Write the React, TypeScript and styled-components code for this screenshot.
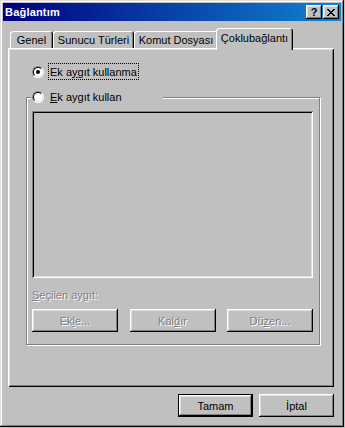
import styled, { createGlobalStyle, css } from 'styled-components';

const GlobalStyle = createGlobalStyle`
  html, body {
    margin: 0;
    padding: 0;
    background: #c0c0c0;
  }
  body {
    font-family: "Liberation Sans", Arial, sans-serif;
    font-size: 11px;
    color: #000;
  }
`;

const raised = css`
  box-shadow: inset -1px -1px #000, inset 1px 1px #fff, inset -2px -2px #808080, inset 2px 2px #dfdfdf;
`;

const Window = styled.div`
  width: 344px;
  height: 427px;
  box-sizing: border-box;
  padding: 3px;
  background: #c0c0c0;
  box-shadow: inset -1px -1px #000, inset 1px 1px #dfdfdf, inset -2px -2px #808080, inset 2px 2px #fff;
  display: flex;
  flex-direction: column;
`;

const TitleBar = styled.div`
  height: 18px;
  flex: none;
  display: flex;
  align-items: center;
  padding: 0 2px;
  background: linear-gradient(90deg, #000080, #1084d0);
  color: #fff;
`;

const TitleText = styled.span`
  flex: 1;
  font-weight: bold;
  font-size: 11px;
  letter-spacing: 0.2px;
`;

const TitleButtons = styled.div`
  display: flex;
  gap: 1px;
`;

const TitleButton = styled.div`
  width: 16px;
  height: 14px;
  box-sizing: border-box;
  background: #c0c0c0;
  ${raised};
  display: flex;
  align-items: center;
  justify-content: center;
  color: #000;
  font-weight: bold;
  font-size: 11px;
  line-height: 1;
`;

const Body = styled.div`
  flex: 1;
  display: flex;
  flex-direction: column;
  padding: 7px 7px 0 5px;
`;

const TabStrip = styled.div`
  height: 20px;
  flex: none;
  display: flex;
  align-items: flex-end;
  padding-left: 2px;
`;

const Tab = styled.div<{ $w: number; $active?: boolean }>`
  width: ${(p) => p.$w}px;
  height: 17px;
  box-sizing: border-box;
  display: flex;
  align-items: center;
  justify-content: center;
  background: #c0c0c0;
  border-radius: 3px 3px 0 0;
  box-shadow: inset 1px 1px #fff, inset -1px 0 #000, inset -2px 0 #808080;
  white-space: nowrap;
  ${(p) =>
    p.$active &&
    css`
      width: ${p.$w + 4}px;
      height: 22px;
      margin: 0 -2px -2px;
      padding-bottom: 3px;
      position: relative;
      z-index: 1;
    `}
`;

const Panel = styled.div`
  height: 339px;
  flex: none;
  box-sizing: border-box;
  padding: 15px 14px 0 18px;
  background: #c0c0c0;
  box-shadow: inset 1px 1px #fff, inset -1px -1px #000, inset 2px 2px #dfdfdf, inset -2px -2px #808080;
  display: flex;
  flex-direction: column;
`;

const RadioRow = styled.div`
  height: 17px;
  display: flex;
  align-items: center;
  gap: 4px;
  padding-left: 6px;
`;

const Radio = styled.span<{ $checked?: boolean }>`
  width: 12px;
  height: 12px;
  flex: none;
  box-sizing: border-box;
  border-radius: 50%;
  border: 1px solid;
  border-color: #808080 #fff #fff #808080;
  background: #fff;
  position: relative;
  &::before {
    content: '';
    position: absolute;
    inset: 0;
    border-radius: 50%;
    border: 1px solid;
    border-color: #000 #dfdfdf #dfdfdf #000;
  }
  ${(p) =>
    p.$checked &&
    css`
      &::after {
        content: '';
        position: absolute;
        left: 3px;
        top: 3px;
        width: 4px;
        height: 4px;
        border-radius: 50%;
        background: #000;
      }
    `}
`;

const Label = styled.span<{ $focused?: boolean }>`
  height: 17px;
  box-sizing: border-box;
  display: flex;
  align-items: center;
  padding: 0 1px;
  border: 1px solid transparent;
  ${(p) =>
    p.$focused &&
    css`
      border: 1px dotted #000;
    `}
`;

const Key = styled.span`
  text-decoration: underline;
`;

const GroupBox = styled.div`
  margin-top: 17px;
  border: 1px solid #808080;
  box-shadow: 1px 1px 0 #fff, inset 1px 1px 0 #fff;
  padding: 0 6px 12px 5px;
  display: flex;
  flex-direction: column;
`;

const Legend = styled.div`
  width: 131px;
  height: 17px;
  margin: -10px 0 0 -1px;
  padding-left: 1px;
  display: flex;
  align-items: center;
  gap: 4px;
  background: #c0c0c0;
`;

const ListBox = styled.div`
  margin-top: 6px;
  height: 167px;
  background: #c0c0c0;
  box-shadow: inset 1px 1px #808080, inset -1px -1px #fff, inset 2px 2px #000, inset -2px -2px #dfdfdf;
`;

const disabledText = css`
  color: #808080;
  text-shadow: 1px 1px 0 #fff;
`;

const Caption = styled.div`
  margin-top: 11px;
  height: 13px;
  line-height: 13px;
  ${disabledText};
`;

const ButtonRow = styled.div`
  margin-top: 7px;
  display: flex;
  justify-content: space-between;
`;

const Button = styled.div<{ $w: number; $disabled?: boolean; $default?: boolean }>`
  width: ${(p) => p.$w}px;
  height: 23px;
  box-sizing: border-box;
  display: flex;
  align-items: center;
  justify-content: center;
  background: #c0c0c0;
  ${raised};
  ${(p) => p.$disabled && disabledText};
  ${(p) =>
    p.$default &&
    css`
      border: 1px solid #000;
    `}
`;

const Footer = styled.div`
  margin-top: 7px;
  display: flex;
  justify-content: flex-end;
  gap: 6px;
`;

const closePixels = [
  [0, 0], [1, 0], [6, 0], [7, 0],
  [1, 1], [2, 1], [5, 1], [6, 1],
  [2, 2], [3, 2], [4, 2], [5, 2],
  [3, 3], [4, 3],
  [2, 4], [3, 4], [4, 4], [5, 4],
  [1, 5], [2, 5], [5, 5], [6, 5],
  [0, 6], [1, 6], [6, 6], [7, 6],
];

const CloseGlyph = () => (
  <svg width="8" height="7" viewBox="0 0 8 7" shapeRendering="crispEdges">
    {closePixels.map(([x, y]) => (
      <rect key={`${x}-${y}`} x={x} y={y} width="1" height="1" fill="#000" />
    ))}
  </svg>
);

const tabs = [
  { label: 'Genel', w: 43 },
  { label: 'Sunucu Türleri', w: 81 },
  { label: 'Komut Dosyası', w: 84 },
  { label: 'Çoklubağlantı', w: 73, active: true },
];

export default function App() {
  return (
    <>
      <GlobalStyle />
      <Window>
        <TitleBar>
          <TitleText>Bağlantım</TitleText>
          <TitleButtons>
            <TitleButton>?</TitleButton>
            <TitleButton>
              <CloseGlyph />
            </TitleButton>
          </TitleButtons>
        </TitleBar>
        <Body>
          <TabStrip>
            {tabs.map((t) => (
              <Tab key={t.label} $w={t.w} $active={t.active}>
                {t.label}
              </Tab>
            ))}
          </TabStrip>
          <Panel>
            <RadioRow>
              <Radio $checked />
              <Label $focused>
                Ek a<Key>y</Key>gıt kullanma
              </Label>
            </RadioRow>
            <GroupBox>
              <Legend>
                <Radio />
                <Label>
                  <Key>E</Key>k aygıt kullan
                </Label>
              </Legend>
              <ListBox />
              <Caption>
                <Key>S</Key>eçilen aygıt:
              </Caption>
              <ButtonRow>
                <Button $w={86} $disabled>
                  Ek<Key>l</Key>e...
                </Button>
                <Button $w={86} $disabled>
                  Kal<Key>d</Key>ır
                </Button>
                <Button $w={86} $disabled>
                  Dü<Key>z</Key>en...
                </Button>
              </ButtonRow>
            </GroupBox>
          </Panel>
          <Footer>
            <Button $w={75} $default>
              Tamam
            </Button>
            <Button $w={75}>İptal</Button>
          </Footer>
        </Body>
      </Window>
    </>
  );
}
